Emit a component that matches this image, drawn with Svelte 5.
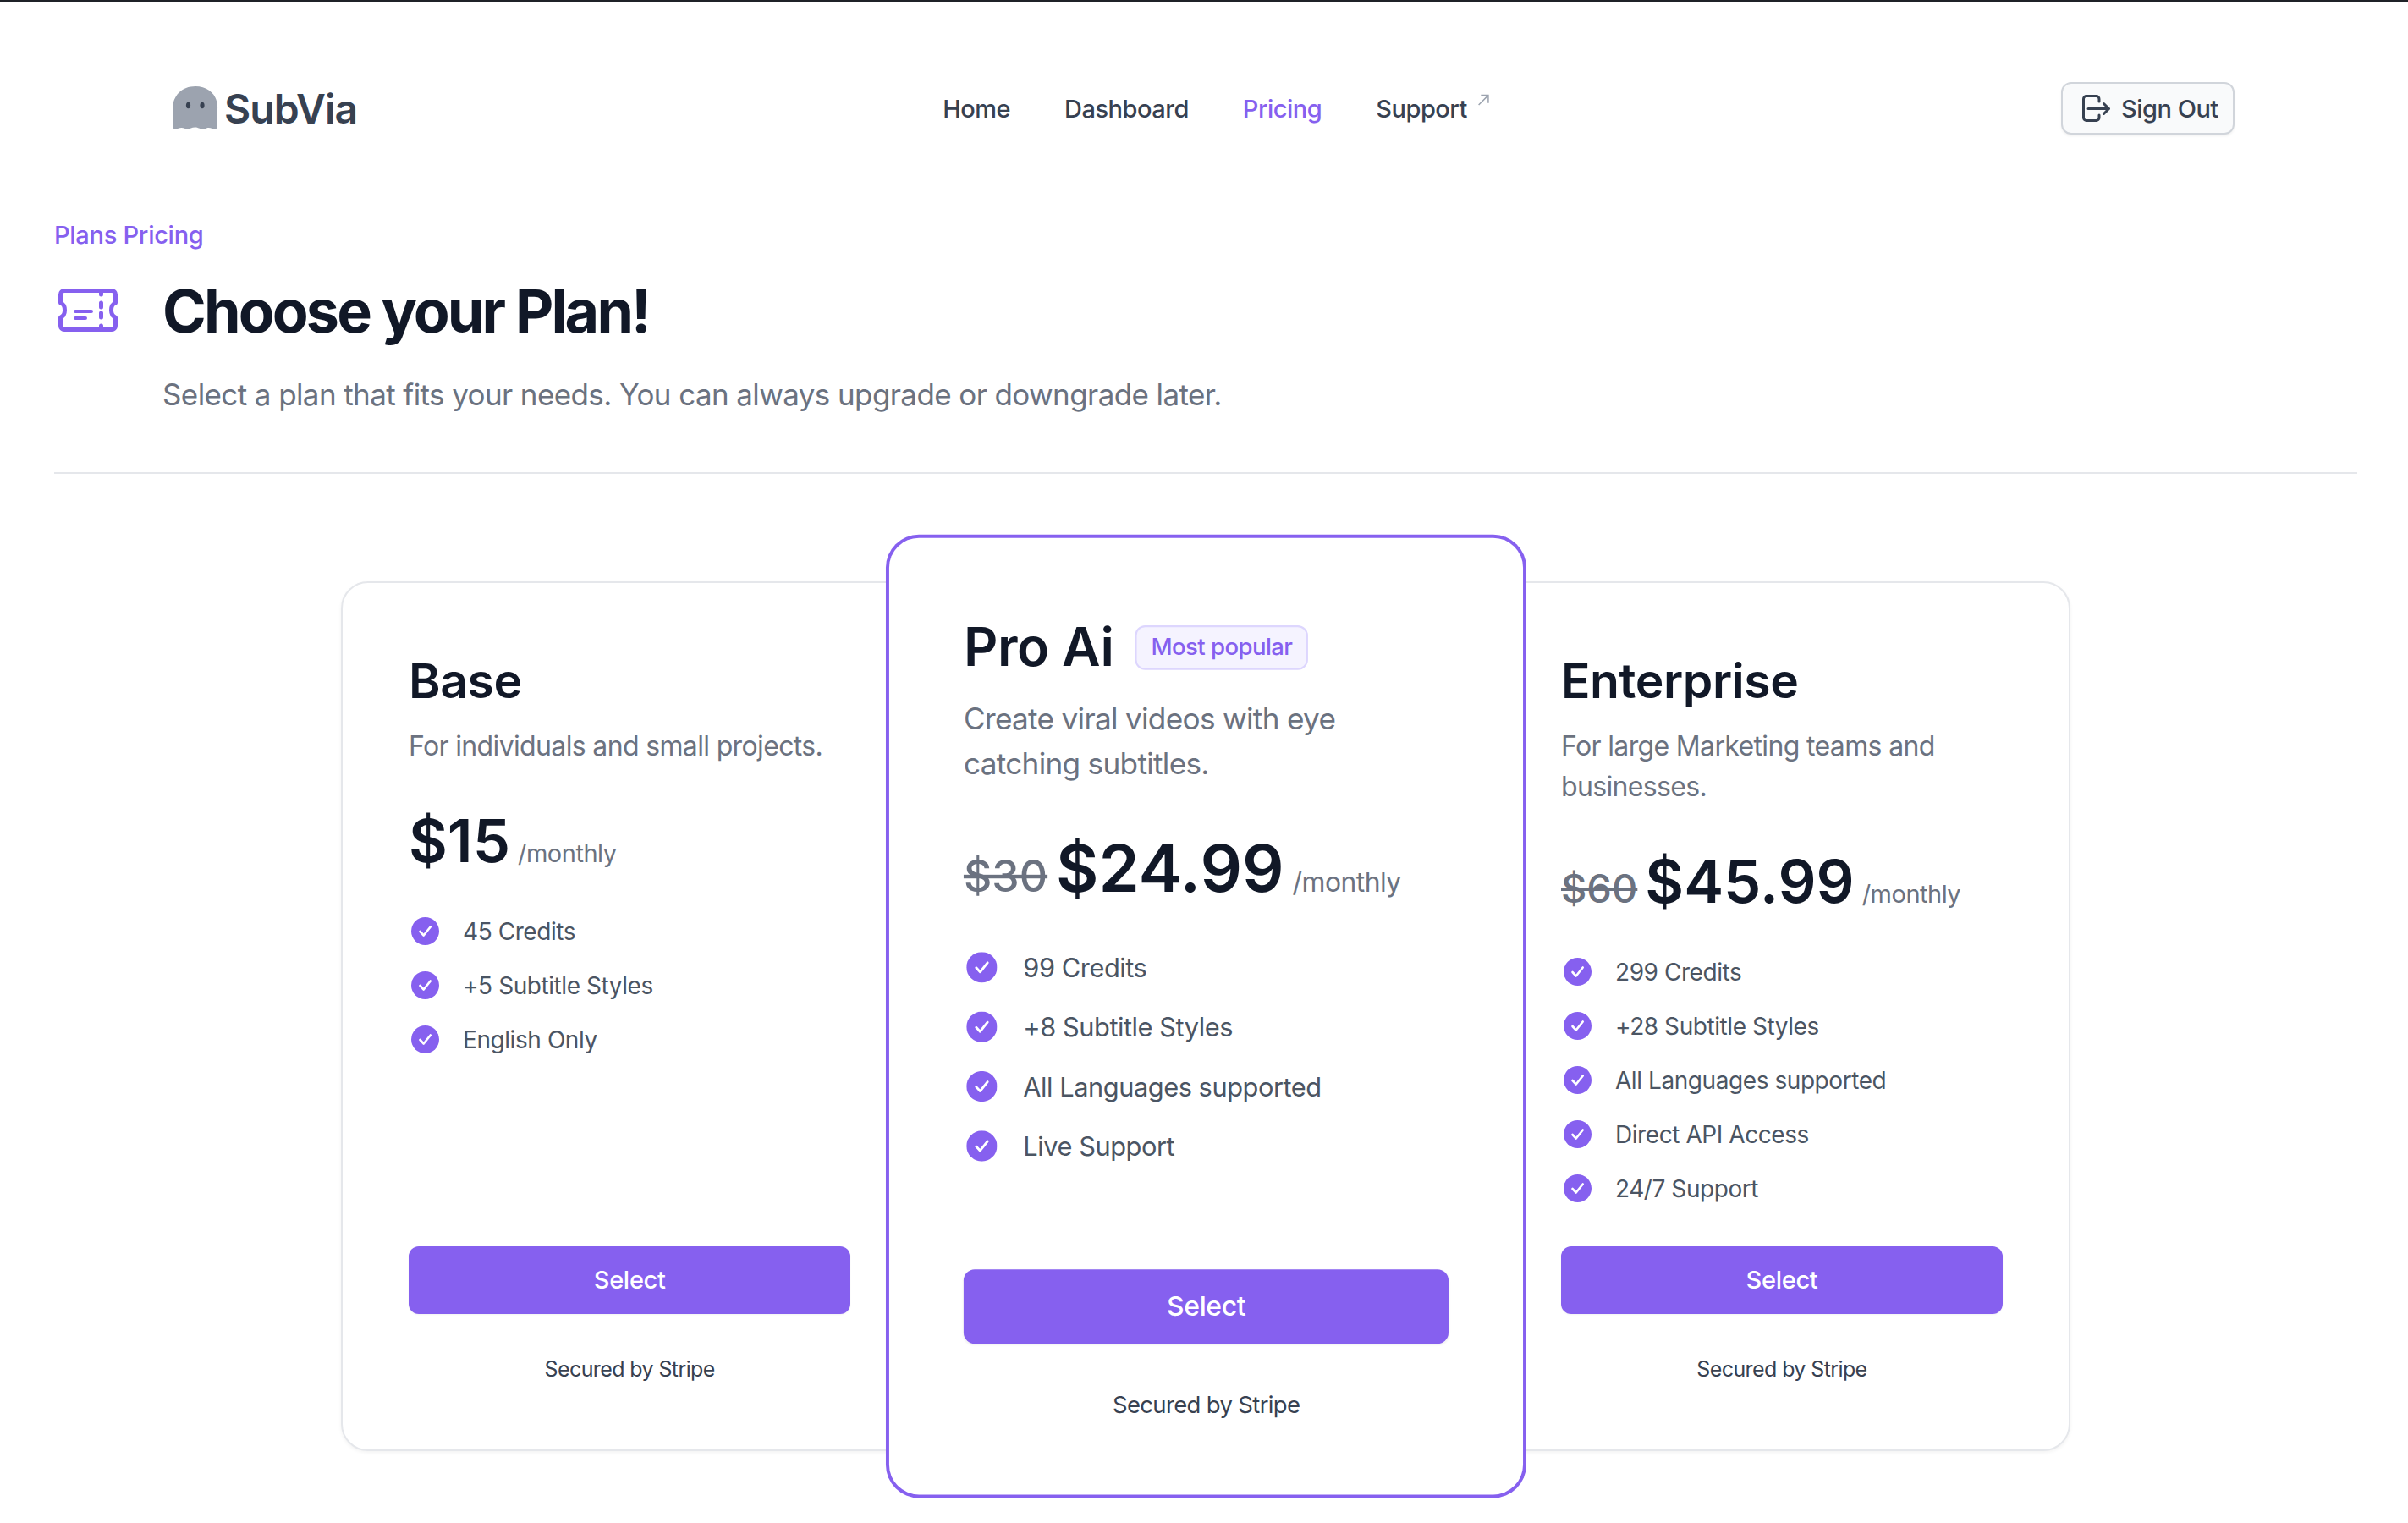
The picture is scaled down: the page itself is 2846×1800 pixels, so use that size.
<script>
  const nav = [
    { label: "Home" },
    { label: "Dashboard" },
    { label: "Pricing", active: true },
    { label: "Support", external: true }
  ];

  const plans = [
    {
      name: "Base",
      desc: "For individuals and small projects.",
      price: "$15",
      features: ["45 Credits", "+5 Subtitle Styles", "English Only"]
    },
    {
      name: "Pro Ai",
      badge: "Most popular",
      featured: true,
      desc: "Create viral videos with eye catching subtitles.",
      was: "$30",
      price: "$24.99",
      features: ["99 Credits", "+8 Subtitle Styles", "All Languages supported", "Live Support"]
    },
    {
      name: "Enterprise",
      desc: "For large Marketing teams and businesses.",
      was: "$60",
      price: "$45.99",
      features: ["299 Credits", "+28 Subtitle Styles", "All Languages supported", "Direct API Access", "24/7 Support"]
    }
  ];
</script>

<div class="page">
  <header class="header">
    <a class="logo" href="#top">
      <svg class="ghost" width="54" height="51" viewBox="0 0 54 51" aria-hidden="true">
        <path fill="#9ca3af" d="M27 0C11 0 0 11 0 27v20c0 2 1 3.500 3 3.500 3 0 4.500-1.500 7.500-1.500s4 1.500 7 1.500 5-2 9-2 5 2 9 2 4-1.500 7-1.500 4.500 1.500 7.500 1.500c2 0 3-1.500 3-3.500V27C54 11 43 0 27 0z"/>
        <ellipse cx="18.500" cy="22.500" rx="2.600" ry="3.800" fill="#374151"/>
        <ellipse cx="35" cy="22.500" rx="2.600" ry="3.800" fill="#374151"/>
      </svg>
      <span>SubVia</span>
    </a>
    <nav class="nav">
      {#each nav as item}
        <a href="#top" class:active={item.active}>
          {item.label}
          {#if item.external}
            <svg class="ext" width="14" height="14" viewBox="0 0 13 13" fill="none" stroke="#9ca3af" stroke-width="1.400" aria-hidden="true"><path d="M1.500 12 12 1.500M4 1.500h8V10"/></svg>
          {/if}
        </a>
      {/each}
    </nav>
    <button type="button" class="signout">
      <svg width="33" height="33" viewBox="0 0 33 33" fill="none" stroke="#374151" stroke-width="3" stroke-linecap="round" stroke-linejoin="round" aria-hidden="true"><path d="M20 8V5a3.500 3.500 0 0 0-3.500-3.500H5A3.500 3.500 0 0 0 1.500 5v22A3.500 3.500 0 0 0 5 30.500h11.500A3.500 3.500 0 0 0 20 27v-3M7 16.500h24.500M25.500 10.500l6 6-6 6"/></svg>
      Sign Out
    </button>
  </header>

  <main class="main">
    <section class="intro">
      <p class="eyebrow">Plans Pricing</p>
      <div class="title-row">
        <svg class="ticket" width="70" height="51" viewBox="0 0 70 51" fill="none" stroke="#8660ef" stroke-width="5" stroke-linecap="round" stroke-linejoin="round" aria-hidden="true">
          <path d="M7 2.500h56a4.500 4.500 0 0 1 4.500 4.500v10c-3 1-5 4-5 8.500s2 7.500 5 8.500v10a4.500 4.500 0 0 1-4.500 4.500H7A4.500 4.500 0 0 1 2.500 44V34c3-1 5-4 5-8.500s-2-7.500-5-8.500V7A4.500 4.500 0 0 1 7 2.500z"/>
          <path d="M50.500 3v4M50.500 17v5M50.500 29v5M50.500 44v4"/>
          <path stroke-width="4" d="M20 27h19M20 35h12"/>
        </svg>
        <h1>Choose your Plan!</h1>
      </div>
      <p class="lead">Select a plan that fits your needs. You can always upgrade or downgrade later.</p>
    </section>

    <section class="plans">
      {#each plans as plan}
        <article class="card" class:featured={plan.featured}>
          <div class="name-row">
            <h2>{plan.name}</h2>
            {#if plan.badge}<span class="badge">{plan.badge}</span>{/if}
          </div>
          <p class="desc">{plan.desc}</p>
          <div class="price">
            {#if plan.was}<s>{plan.was}</s>{/if}
            <strong>{plan.price}</strong>
            <span>/monthly</span>
          </div>
          <ul class="features">
            {#each plan.features as feature}
              <li>
                <svg width="33" height="33" viewBox="0 0 33 33" aria-hidden="true">
                  <circle cx="16.500" cy="16.500" r="16.500" fill="#8660ef"/>
                  <path d="M10.500 17l4.200 4.500 8-10" fill="none" stroke="#fff" stroke-width="2.600" stroke-linecap="round" stroke-linejoin="round"/>
                </svg>
                {feature}
              </li>
            {/each}
          </ul>
          <button type="button" class="select">Select</button>
          <p class="secured">Secured by Stripe</p>
        </article>
      {/each}
    </section>
  </main>
</div>

<style>
  :global(body) {
    background: #fff;
  }

  .page {
    border-top: 2px solid #1f2228;
    height: 1798px;
    overflow: hidden;
    font-family: Inter, "Noto Sans", sans-serif;
    color: #374151;
  }

  .header {
    display: flex;
    align-items: center;
    justify-content: space-between;
    padding: 95px 205px 0 204px;
  }

  .logo {
    display: flex;
    align-items: center;
    gap: 7px;
    color: #374151;
    font-size: 48px;
    font-weight: 600;
    letter-spacing: -0.02em;
    text-decoration: none;
  }

  .ghost {
    margin-bottom: 2px;
  }

  .nav {
    display: flex;
    gap: 64px;
    margin-left: -10px;
    font-size: 29px;
    font-weight: 500;
    letter-spacing: -0.5px;
  }

  .nav a {
    color: #374151;
    text-decoration: none;
    position: relative;
  }

  .nav a.active {
    color: #8660ef;
  }

  .ext {
    position: absolute;
    left: calc(100% + 12px);
    top: 0;
  }

  .signout {
    display: flex;
    align-items: center;
    gap: 13px;
    height: 62px;
    width: 205px;
    padding: 0 0 0 23px;
    background: #f9fafb;
    border: 2px solid #d1d5db;
    border-radius: 12px;
    box-shadow: 0 2px 3px rgba(0, 0, 0, 0.05);
    color: #374151;
    font: 500 29px Inter, sans-serif;
    letter-spacing: -0.5px;
  }

  .main {
    padding: 0 60px 0 64px;
  }

  .intro {
    border-bottom: 2px solid #e5e7eb;
    padding-top: 101px;
    box-sizing: border-box;
    height: 401px;
  }

  .eyebrow {
    margin: 0;
    color: #8660ef;
    font-size: 29px;
    font-weight: 500;
    letter-spacing: -0.28px;
    line-height: 36px;
  }

  .title-row {
    display: flex;
    align-items: center;
    gap: 53px;
    margin-top: 30px;
    padding-left: 5px;
  }

  .ticket {
    margin-bottom: 3px;
  }

  h1 {
    margin: 0;
    color: #111827;
    font-size: 70px;
    font-weight: 700;
    letter-spacing: -2.85px;
    line-height: 84px;
  }

  .lead {
    margin: 29px 0 0 128px;
    color: #6b7280;
    font-size: 35px;
    letter-spacing: -0.6px;
    line-height: 54px;
  }

  .plans {
    display: grid;
    grid-template-columns: 682.33px 679.66px 682px;
    margin: 127px 0 0 339px;
  }

  .card {
    display: flex;
    flex-direction: column;
    padding: 82.500px 78px 77px;
    background: #fff;
    border: 2px solid #e5e7eb;
    border-radius: 32px;
    box-shadow: 0 2px 4px rgba(0, 0, 0, 0.05);
  }

  .card.featured {
    position: relative;
    z-index: 1;
    border: none;
    margin-right: -1.660px;
    padding: 84.500px 80px 79px;
    transform: scale(1.1);
    box-shadow: 0 0 0 3.600px #8660ef;
  }

  .name-row {
    display: flex;
    align-items: center;
    gap: 23px;
  }

  h2 {
    margin: 0;
    color: #111827;
    font-size: 57px;
    font-weight: 600;
    letter-spacing: -0.4px;
    line-height: 66px;
  }

  .badge {
    padding: 0 15px;
    height: 44px;
    line-height: 43px;
    background: #f5f3ff;
    border: 2px solid #ddd6fe;
    border-radius: 11px;
    color: #8660ef;
    font-size: 25px;
    font-weight: 500;
    letter-spacing: -0.5px;
  }

  .desc {
    margin: 20px 0 0;
    color: #6b7280;
    font-size: 32px;
    letter-spacing: -0.65px;
    line-height: 48px;
  }

  .price {
    display: flex;
    align-items: baseline;
    gap: 9px;
    margin-top: 46px;
    height: 83px;
    line-height: 83px;
  }

  .price s {
    color: #6b7280;
    font-size: 47px;
    font-weight: 500;
  }

  .price strong {
    color: #111827;
    font-size: 70.500px;
    font-weight: 600;
  }

  .price span {
    color: #6b7280;
    font-size: 29px;
    letter-spacing: -0.5px;
  }

  .features {
    display: flex;
    flex-direction: column;
    gap: 24px;
    margin: 46px 0 48px;
    padding: 0;
    list-style: none;
  }

  .features li {
    display: flex;
    align-items: center;
    gap: 28px;
    height: 40px;
    color: #4b5563;
    font-size: 28px;
    letter-spacing: -0.43px;
  }

  .features svg {
    margin-left: 3px;
    flex-shrink: 0;
  }

  .select {
    height: 80px;
    margin-top: auto;
    background: #8660ef;
    border: none;
    border-radius: 12px;
    color: #fff;
    font: 500 29px Inter, sans-serif;
    letter-spacing: -0.3px;
    box-shadow: 0 1px 2px rgba(0, 0, 0, 0.05);
  }

  .secured {
    margin: 47px 0 0;
    color: #374151;
    font-size: 25px;
    letter-spacing: -0.6px;
    line-height: 36px;
    text-align: center;
  }
</style>
